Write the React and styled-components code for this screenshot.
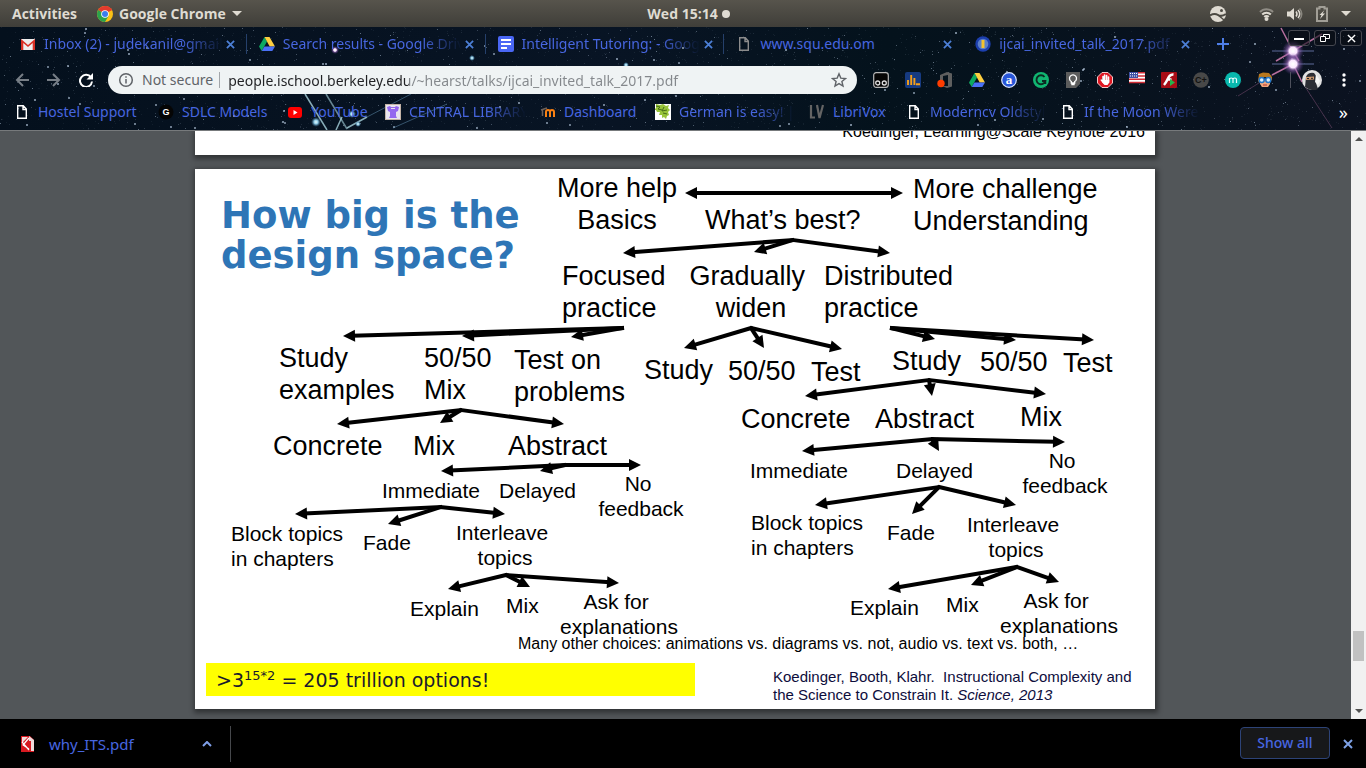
import React from "react";
import styled, { createGlobalStyle } from "styled-components";

const GlobalStyle = createGlobalStyle`
  * { box-sizing: border-box; }
  body { margin: 0; background: #000; font-family: "Noto Sans", "Open Sans", sans-serif; font-size: 14px; }
  button { font: inherit; color: inherit; background: none; border: 0; padding: 0; }
  a { color: inherit; text-decoration: none; }
  svg { display: block; }
`;

const Desktop = styled.div`
  min-height: 100vh;
  display: flex;
  flex-direction: column;
`;

/* ---------- system bar ---------- */

const SystemBar = styled.header`
  height: 27px;
  display: grid;
  grid-template-columns: 1fr auto 1fr;
  align-items: center;
  padding: 0 15px 0 12px;
  background: linear-gradient(#57544c, #3f3e39);
  color: #dfdbd2;
  font-family: "Open Sans", sans-serif;
  font-weight: 700;
  line-height: 20px;
`;

const BarGroup = styled.div`
  display: flex;
  align-items: center;
  gap: ${(p) => p.$gap}px;
  justify-content: ${(p) => (p.$end ? "flex-end" : "flex-start")};
`;

const Clock = styled(BarGroup)`
  padding-left: 14px;
`;

const BarButton = styled.button`
  display: flex;
  align-items: center;
  gap: 6px;
`;

const Caret = styled.span`
  border: 5px solid transparent;
  border-top-color: #dfdbd2;
  border-bottom-width: 0;
`;

const Dot = styled.span`
  width: 8px;
  height: 8px;
  border-radius: 50%;
  background: #dfdbd2;
`;

/* ---------- browser chrome ---------- */

const Chrome = styled.div`
  position: relative;
  overflow: hidden;
  background: linear-gradient(90deg, #04101d, #081424 45%, #04121c 65%, #0b1220);
  color: #4766e0;
`;

const Sky = styled.svg`
  position: absolute;
  inset: 0;
  width: 100%;
  height: 100%;
`;

const ChromeRow = styled.div`
  position: relative;
  display: flex;
  align-items: ${(p) => p.$align || "center"};
  height: ${(p) => p.$height}px;
  padding: ${(p) => p.$pad};
`;

const TabStrip = styled.div`
  flex: 0 1 1194px;
  min-width: 0;
  display: flex;
  align-items: center;
  height: 34px;
`;

const Tab = styled.div`
  flex: 1 1 0;
  min-width: 0;
  display: flex;
  align-items: center;
  height: 20px;
  padding: 0 7px 0 12px;
  border-right: 1px solid ${(p) => (p.$divider ? "#25406b" : "transparent")};
`;

const FadeText = styled.span`
  flex: 1;
  min-width: 0;
  margin-left: 8px;
  overflow: hidden;
  white-space: nowrap;
  line-height: 20px;
  ${(p) => p.$fade && "mask-image: linear-gradient(90deg, #000 calc(100% - 40px), transparent);"}
`;

const CloseButton = styled.button`
  width: 16px;
  height: 16px;
  display: grid;
  place-items: center;
  color: ${(p) => p.$color || "#4c7fd6"};
`;

const NewTab = styled(CloseButton)`
  margin: 9px 0 0 13px;
`;

const WindowButtons = styled.div`
  display: flex;
  gap: 4px;
  margin: 3px 0 0 auto;
`;

const WindowButton = styled.button`
  width: 22px;
  height: 16px;
  display: grid;
  place-items: center;
  border: 1px solid #45474f;
  border-radius: 3px;
  background: rgba(10, 13, 20, 0.6);
  color: #fff;
`;

const ToolButton = styled.button`
  width: 32px;
  height: 28px;
  display: grid;
  place-items: center;
  flex: none;
`;

const Omnibox = styled.form`
  flex: 1;
  min-width: 0;
  height: 28px;
  margin: 0 8px 0 6px;
  padding: 0 10px;
  display: flex;
  align-items: center;
  border-radius: 14px;
  background: #eff3f4;
  color: #5f6368;
`;

const Security = styled.label`
  display: flex;
  align-items: center;
  gap: 8px;
  padding-right: 6px;
  border-right: 1px solid #a2a6aa;
  line-height: 16px;
  white-space: nowrap;
`;

const Address = styled.input`
  flex: 1;
  min-width: 0;
  border: 0;
  outline: 0;
  margin-left: 8px;
  padding: 0;
  height: 20px;
  font: inherit;
  color: transparent;
  background: linear-gradient(90deg, #202124 ${(p) => p.$host}px, #84888c ${(p) => p.$host}px);
  background-clip: text;
`;

const Separator = styled.span`
  width: 1px;
  height: 16px;
  margin: 0 5px 0 9px;
  background: #4d505c;
`;

const Bookmark = styled.a`
  flex: 0 1 ${(p) => p.$width}px;
  min-width: 0;
  display: flex;
  align-items: center;
  padding-right: 14px;
`;

const More = styled.button`
  margin-left: auto;
  color: #fff;
  font-size: 18px;
  line-height: 20px;
`;

/* ---------- document viewer ---------- */

const Viewer = styled.main`
  flex: 1;
  display: flex;
  background: #525659;
  border-top: 1px solid #777a7c;
`;

const Pages = styled.div`
  flex: 1;
  min-width: 0;
  display: flex;
  flex-direction: column;
  align-items: center;
  gap: 14px;
  padding: 0 1px 10px 0;
  overflow: hidden;
`;

const PreviousPage = styled.section`
  width: 960px;
  height: 24px;
  display: flex;
  justify-content: flex-end;
  align-items: flex-end;
  padding: 0 10px 14px;
  overflow: hidden;
  background: #fff;
  color: #000;
  font: 16px/18px "Liberation Sans", Arial, sans-serif;
  box-shadow: 1px 2px 5px 2px rgba(0, 0, 0, 0.4);
`;

const Slide = styled.section`
  position: relative;
  width: 960px;
  height: 540px;
  background: #fff;
  color: #000;
  font-family: "Liberation Sans", Arial, sans-serif;
  box-shadow: 1px 2px 5px 2px rgba(0, 0, 0, 0.4);
`;

const Title = styled.h1`
  position: absolute;
  left: 26px;
  top: 27px;
  margin: 0;
  font: bold 37px/40px "DejaVu Sans", Verdana, sans-serif;
  color: #2e75b6;
  white-space: pre;
`;

const sizes = {
  large: "font-size: 27px; line-height: 32px;",
  medium: "font-size: 21px; line-height: 25px;",
  note: "font-size: 16px; line-height: 18px;",
};

const Node = styled.div`
  position: absolute;
  left: ${(p) => p.$x}px;
  top: ${(p) => p.$y}px;
  white-space: pre;
  ${(p) => sizes[p.$size]}
  ${(p) => p.$center && "transform: translateX(-50%); text-align: center;"}
`;

const Highlight = styled.p`
  position: absolute;
  left: 11px;
  top: 494px;
  width: 489px;
  height: 33px;
  margin: 0;
  padding-left: 10px;
  background: #ff0;
  color: #1a1a2e;
  font: 19px/34px "DejaVu Sans", Verdana, sans-serif;
  sup { font-size: 13px; line-height: 0; }
`;

const Citation = styled.p`
  position: absolute;
  left: 578px;
  top: 499px;
  margin: 0;
  white-space: pre;
  color: #0d0d3c;
  font-size: 15px;
  line-height: 18px;
`;

const Arrows = styled.svg`
  position: absolute;
  inset: 0;
`;

const ScrollTrack = styled.div`
  width: 15px;
  display: flex;
  flex-direction: column;
  align-items: center;
  background: #f1f1f1;
`;

const ScrollArrow = styled.button`
  width: 15px;
  height: 16px;
  display: grid;
  place-items: center;
  color: #505050;
`;

const ScrollThumb = styled.div`
  width: 11px;
  height: 30px;
  margin: auto 0 42px;
  background: #c1c1c1;
`;

/* ---------- downloads ---------- */

const Downloads = styled.footer`
  height: 49px;
  display: flex;
  align-items: center;
  padding: 0 10px 0 20px;
  background: #000;
  color: #4766e0;
`;

const DownloadItem = styled.div`
  width: 211px;
  height: 36px;
  display: flex;
  align-items: center;
  gap: 13px;
  padding-right: 15px;
  border-right: 1px solid #46484c;
  a { flex: 1; font-size: 15px; }
`;

const ShowAll = styled.button`
  width: 90px;
  height: 32px;
  margin: 0 10px 2px auto;
  border: 1px solid #2d4377;
  border-radius: 4px;
  background: #17181a;
  font-weight: 500;
`;

/* ---------- icons ---------- */

const Cross = ({ size = 10, width = 2 }) => (
  <svg width={size} height={size} viewBox="0 0 10 10" stroke="currentColor" strokeWidth={width}>
    <path d="M1 1l8 8M9 1l-8 8" />
  </svg>
);

const IconSvg = styled.svg`
  flex: none;
`;

const Icon = ({ children }) => (
  <IconSvg width="16" height="16" viewBox="0 0 16 16">{children}</IconSvg>
);

const letter = { textAnchor: "middle", fontFamily: "Liberation Sans, sans-serif", fontWeight: "bold" };

const FileIcon = ({ color = "#fff" }) => (
  <Icon><path d="M3.700 1.700h5.600l3 3.300v9.300H3.700zM9 1.700V5.500h3.300" fill="none" stroke={color} strokeWidth="1.400" /></Icon>
);
const ChromeIcon = () => (
  <Icon>
    <circle cx="8" cy="8" r="8" fill="#fbc116" />
    <path d="M8 8L1.100 4A8 8 0 0 1 14.900 4z" fill="#e33b2e" />
    <path d="M1.100 4A8 8 0 0 0 8 16L11.500 10L8 8z" fill="#2ba24c" />
    <path d="M8 4.300H15L14.900 4A8 8 0 0 0 8 0z" fill="#e33b2e" />
    <circle cx="8" cy="8" r="3.800" fill="#fff" /><circle cx="8" cy="8" r="3" fill="#3b7ded" />
  </Icon>
);
const GmailIcon = () => (
  <Icon>
    <path d="M1 3h14v11H1z" fill="#eee" />
    <path d="M1 14V3l7 6 7-6v11h-2.300V7L8 11 3.300 7v7z" fill="#d93025" />
  </Icon>
);
const driveShapes = (
  <>
    <path d="M5.500 1L0 10.500 2.700 15 8 5.500z" fill="#0da960" />
    <path d="M5.500 1h5L16 10.500h-5.300z" fill="#ffcf3f" />
    <path d="M5.400 10.500H16L13.300 15H2.700z" fill="#4a70f5" />
  </>
);
const DriveIcon = () => <Icon>{driveShapes}</Icon>;
const DocsIcon = () => (
  <Icon><rect width="16" height="16" rx="2" fill="#4a67f5" /><path d="M3 4h10M3 8h10M3 12h6" stroke="#fff" strokeWidth="2" /></Icon>
);
const SealIcon = () => (
  <Icon>
    <circle cx="8" cy="8" r="7.700" fill="#1c3fae" /><circle cx="8" cy="8" r="5.300" fill="#5d80c8" />
    <path d="M6.500 4h3v8h-3z" fill="#f5c32c" />
  </Icon>
);
const SdlcIcon = () => (
  <Icon><circle cx="8" cy="8" r="7.500" fill="#050505" /><text {...letter} x="8" y="11" fontSize="9" fill="#fff">G</text></Icon>
);
const YouTubeIcon = () => (
  <Icon><rect x="1" y="3" width="14" height="11" rx="3" fill="#f00" /><path d="M6.500 6l4 2.500-4 2.500z" fill="#fff" /></Icon>
);
const LibraryIcon = () => (
  <Icon>
    <path d="M0 0h16v16H0z" fill="#c3b3a6" /><path d="M1 1h14v14H1z" fill="#e9e4ef" />
    <path d="M2 3l3-1 1 1h4l1-1 3 1-1 4-2 1v4l1 2H4l1-2V8L3 7z" fill="#9468ef" />
    <path d="M6 4h4v1H6z" fill="#e9e4ef" />
  </Icon>
);
const MoodleIcon = () => (
  <Icon>
    <path d="M6 13V8a2 2 0 0 1 4 0v5M10 8a2 2 0 0 1 4 0v5" fill="none" stroke="#f98012" strokeWidth="2" />
    <path d="M1 6l6-2M2.500 6v6" stroke="#6f625a" strokeWidth="1.500" />
  </Icon>
);
const LeavesIcon = () => (
  <Icon>
    <path d="M0 0h16v16H0z" fill="#fff" />
    <path d="M1 0l4 1 3-1 3 2 3-1-1 3 2 2-2 2 1 3-2 1-1 3-2-2-2 1 0-3-3 0 1-3-3 0-1-2-2 0 2-2z" fill="#98c43a" />
    <path d="M1 2l4 1-2 2 4 1M9 3l-2 4 5-1M8 9l4 1" fill="none" stroke="#476e17" />
  </Icon>
);
const LibriIcon = () => (
  <Icon><path d="M2 1v12.500h4M8 1l2.500 13L14 1" fill="none" stroke="#646464" strokeWidth="2.200" /></Icon>
);

const extensions = [
  ["Tampermonkey", <><rect x=".7" y=".7" width="14.600" height="14.600" rx="2.500" fill="#050505" stroke="#b8b8b8" strokeWidth="1.200" /><g fill="none" stroke="#ddd" strokeWidth="1.300"><circle cx="4.700" cy="11" r="2" /><circle cx="11.300" cy="11" r="2" /></g></>],
  ["Analytics", <><rect width="16" height="16" rx="2" fill="#163a80" /><path d="M3 13V8M6.200 13V3M9.400 13V6M11 12.200h4" stroke="#f7a11a" strokeWidth="1.900" /></>],
  ["Office", <><path d="M3 3l7-3 5 1.500v13L10 16l-5-2 6 0V3L6 4v6H3z" fill="#5f5f5f" /><circle cx="4" cy="11.500" r="3.700" fill="#ff3d00" /></>],
  ["Drive", driveShapes],
  ["Dictionary", <><circle cx="8" cy="8" r="7.300" fill="#2856d8" stroke="#dce6ff" strokeWidth="1.200" /><text {...letter} fontFamily="Liberation Serif, serif" x="8" y="12" fontSize="13" fill="#fff">a</text></>],
  ["Grammar", <><circle cx="8" cy="8" r="8" fill="#11b672" /><path d="M11.500 5A4.500 4.500 0 1 0 12.300 9H9M12.300 9v3" fill="none" stroke="#0c2a22" strokeWidth="1.900" /></>],
  ["Keep", <><path d="M1 0h14v12l-4 4H1z" fill="#5c5c5c" /><path d="M6.300 9.500a3.500 3.500 0 1 1 3.400 0v1.500H6.300zM6.300 12.500h3.400" fill="none" stroke="#fff" strokeWidth="1.300" /></>],
  ["Ad blocker", <><path d="M5 .5h6L15.500 5v6L11 15.500H5L.5 11V5z" fill="#e01722" stroke="#f6caca" /><path d="M4.300 8l1.700 2V4.500M7.600 9V3M9.600 9V3.500M11.500 9.500V5" stroke="#fff" strokeWidth="1.600" strokeLinecap="round" /><path d="M5 8h7.300v2.500L10.500 13h-3L5 10z" fill="#fff" /></>],
  ["Language", <><path d="M0 0h16v11H0z" fill="#fff" /><path d="M0 .7h16M0 4h16M0 7.300h16M0 10.400h16" stroke="#d22d36" strokeWidth="1.500" /><path d="M0 0h9v6H0z" fill="#3f51a5" /><path d="M1 1.500h7M1 4h7" stroke="#fff" strokeDasharray="1 1" /></>],
  ["Flash", <><rect width="16" height="16" rx="1" fill="#a80d16" /><path d="M12.500 2.500C7 2 7.500 8 3 13M5.500 7.500h5" fill="none" stroke="#fff" strokeWidth="2.400" /><path d="M9 7l5 3.500L9 14z" fill="#25b34b" /></>],
  ["Citations", <><circle cx="8" cy="8" r="7.800" fill="#484848" /><text {...letter} x="8" y="11" fontSize="9" fill="#111">C+</text></>],
  ["Mendeley", <><circle cx="8" cy="8" r="8" fill="#08b8ad" /><path d="M4.500 11V6M4.500 7.500c0-2 3.500-2 3.500 0V11M8 7.500c0-2 3.500-2 3.500 0V11" fill="none" stroke="#e9ffff" strokeWidth="1.200" /></>],
  ["Reader", <><path d="M3 8h10v4l-2 3H5l-2-3z" fill="#f0a87c" /><path d="M1 9l1-7 4-1.500 6 .5 3 4v4l-2-3-5-1-4 1-2 4z" fill="#b9781d" /><g fill="#d9effc" stroke="#2477c8" strokeWidth="1.500"><circle cx="4.700" cy="8" r="2.500" /><circle cx="11.300" cy="8" r="2.500" /></g><path d="M6 13h4" stroke="#b33" /></>],
];

/* ---------- night sky theme ---------- */

function makeStars(count) {
  let seed = 20170;
  const next = () => {
    seed = (seed * 16807) % 2147483647;
    return seed / 2147483647;
  };
  return Array.from({ length: count }, () => {
    const x = Math.round(next() * 1366);
    const y = Math.round(next() * 103);
    const bright = next();
    return { x, y, size: bright > 0.97 ? 2 : 1, opacity: 0.07 + Math.pow(bright, 6) * 0.5 };
  });
}
const stars = makeStars(2600);

const NightSky = () => (
  <Sky viewBox="0 0 1366 103" preserveAspectRatio="xMidYMin slice" aria-hidden="true">
    <defs>
      <radialGradient id="flare">
        <stop offset="0" stopColor="#fff" /><stop offset=".35" stopColor="#fbe6ff" />
        <stop offset=".55" stopColor="#a572c4" stopOpacity=".6" /><stop offset="1" stopColor="#5a3a90" stopOpacity="0" />
      </radialGradient>
      <radialGradient id="glow">
        <stop offset="0" stopColor="#e6fbff" /><stop offset=".4" stopColor="#8fcbe6" />
        <stop offset="1" stopColor="#2a5f8a" stopOpacity="0" />
      </radialGradient>
    </defs>
    {stars.map((s, i) => <rect key={i} x={s.x} y={s.y} width={s.size} height={s.size} fill="#c9dcf2" opacity={s.opacity} />)}
    <g stroke="#b66e9d" fill="none">
      <path d="M1281 1l12 23 29-17M1276 34l17-10 6 10M1272 48l21-11 9 18" strokeWidth="1.500" />
      <path d="M1302 55l30 46M1238 69l34-21" opacity=".35" />
      <path d="M1272 24h42M1272 37h42" stroke="#98a9ed" opacity=".6" />
    </g>
    <circle cx="1293" cy="24" r="11" fill="url(#flare)" /><circle cx="1293" cy="37" r="11" fill="url(#flare)" />
    <g stroke="#a9d3dd" fill="none">
      <path d="M305 67l22 36" strokeWidth="1.500" opacity=".8" />
      <path d="M326 67l21 35" strokeWidth="1.500" opacity=".6" />
      <path d="M347 101l20-11M336 103l6-13" strokeWidth="1.500" opacity=".8" />
      <path d="M367 90l44-23M393 101l54-24" stroke="#6fa5c8" opacity=".45" />
    </g>
    <circle cx="316" cy="95" r="5" fill="url(#glow)" /><circle cx="352" cy="87" r="4" fill="url(#glow)" />
    <circle cx="358" cy="97" r="3" fill="url(#glow)" /><circle cx="335" cy="23" r="4" fill="url(#flare)" />
    <circle cx="472" cy="31" r="3" fill="url(#glow)" /><circle cx="626" cy="38" r="3" fill="url(#glow)" />
  </Sky>
);

/* ---------- content ---------- */

const tabs = [
  { title: "Inbox (2) - judekanil@gmail.com", icon: <GmailIcon />, fade: true, divider: true },
  { title: "Search results - Google Drive", icon: <DriveIcon />, fade: true, divider: true },
  { title: "Intelligent Tutoring: - Google Docs", icon: <DocsIcon />, fade: true, divider: true },
  { title: "www.squ.edu.om", icon: <FileIcon color="#8c8c8c" /> },
  { title: "ijcai_invited_talk_2017.pdf", icon: <SealIcon />, fade: true },
];

const bookmarks = [
  ["Hostel Support", 144, <FileIcon />],
  ["SDLC Models", 129, <SdlcIcon />],
  ["YouTube", 98, <YouTubeIcon />],
  ["CENTRAL LIBRARY", 155, <LibraryIcon />, true],
  ["Dashboard", 115, <MoodleIcon />],
  ["German is easy! | The", 154, <LeavesIcon />, true],
  ["LibriVox", 97, <LibriIcon />],
  ["Moderncv Oldstyle", 154, <FileIcon />, true],
  ["If the Moon Were Only", 154, <FileIcon />, true],
];

const nodes = [
  ["large", 422, 3, "More help\nBasics", true],
  ["large", 510, 35, "What’s best?"],
  ["large", 718, 4, "More challenge\nUnderstanding"],
  ["large", 367, 91, "Focused\npractice"],
  ["large", 556, 91, "Gradually \nwiden", true],
  ["large", 629, 91, "Distributed\npractice"],
  ["large", 84, 173, "Study\nexamples"],
  ["large", 229, 173, "50/50\nMix"],
  ["large", 319, 175, "Test on\nproblems"],
  ["large", 449, 185, "Study"],
  ["large", 533, 186, "50/50"],
  ["large", 616, 187, "Test"],
  ["large", 697, 176, "Study"],
  ["large", 785, 177, "50/50"],
  ["large", 868, 178, "Test"],
  ["large", 78, 261, "Concrete"],
  ["large", 218, 261, "Mix"],
  ["large", 313, 261, "Abstract"],
  ["large", 546, 234, "Concrete"],
  ["large", 680, 234, "Abstract"],
  ["large", 825, 232, "Mix"],
  ["medium", 187, 309, "Immediate"],
  ["medium", 304, 309, "Delayed"],
  ["medium", 446, 302, "No \nfeedback", true],
  ["medium", 36, 352, "Block topics\nin chapters"],
  ["medium", 168, 361, "Fade"],
  ["medium", 310, 351, "Interleave \ntopics", true],
  ["medium", 215, 427, "Explain"],
  ["medium", 311, 424, "Mix"],
  ["medium", 424, 420, "Ask for \nexplanations", true],
  ["medium", 555, 289, "Immediate"],
  ["medium", 701, 289, "Delayed"],
  ["medium", 870, 279, "No \nfeedback", true],
  ["medium", 556, 341, "Block topics\nin chapters"],
  ["medium", 692, 351, "Fade"],
  ["medium", 821, 343, "Interleave \ntopics", true],
  ["medium", 655, 426, "Explain"],
  ["medium", 751, 423, "Mix"],
  ["medium", 864, 419, "Ask for \nexplanations", true],
  ["note", 323, 466, "Many other choices: animations vs. diagrams vs. not, audio vs. text vs. both, …"],
];

const branches = [
  { from: [598, 71], to: [[428, 84], [559, 83], [695, 84]] },
  { from: [428, 159], to: [[148, 167], [267, 167], [376, 168]] },
  { from: [556, 159], to: [[489, 179], [569, 179], [647, 180]] },
  { from: [696, 159], to: [[740, 170], [821, 171], [899, 171]] },
  { from: [734, 211], to: [[610, 227], [737, 227], [851, 225]] },
  { from: [266, 241], to: [[142, 255], [245, 254], [369, 255]] },
  { from: [370, 296], to: [[246, 302], [345, 302], [446, 296]] },
  { from: [246, 338], to: [[100, 345], [193, 355], [310, 345]] },
  { from: [311, 406], to: [[253, 420], [335, 418], [424, 414]] },
  { from: [737, 270], to: [[607, 282], [744, 282], [870, 273]] },
  { from: [744, 318], to: [[620, 336], [717, 345], [821, 336]] },
  { from: [822, 398], to: [[693, 420], [776, 416], [864, 413]] },
  { from: [598, 24], to: [[490, 24], [708, 24]] },
];

function Arrow({ from, to }) {
  const [x1, y1] = from;
  const [x2, y2] = to;
  const length = Math.hypot(x2 - x1, y2 - y1);
  const angle = (Math.atan2(y2 - y1, x2 - x1) * 180) / Math.PI;
  return (
    <g transform={`translate(${x1} ${y1}) rotate(${angle})`}>
      <path d={`M-1 0H${length - 9}`} stroke="#000" strokeWidth="4" />
      <path d={`M${length} 0l-12 -6v12z`} />
    </g>
  );
}

export default function App() {
  return (
    <Desktop>
      <GlobalStyle />
      <SystemBar>
        <BarGroup $gap={20}>
          <BarButton>Activities</BarButton>
          <BarButton><ChromeIcon />Google Chrome<Caret /></BarButton>
        </BarGroup>
        <Clock $gap={4}>Wed 15:14<Dot /></Clock>
        <BarGroup $gap={13} $end>
          <svg width="36" height="16" viewBox="0 0 36 16">
            <circle cx="8" cy="8" r="8" fill="#dfdbd2" />
            <path d="M0 9.500c3-2 5-2.500 8-.5s5 1 8-1" fill="none" stroke="#4b4942" strokeWidth="2" />
            <path d="M8 9l6 5" stroke="#4b4942" strokeWidth="1.500" /><circle cx="11.500" cy="4.500" r="1.500" fill="#4b4942" />
          </svg>
          <svg width="15" height="14" viewBox="0 0 15 14" fill="none" stroke="#dfdbd2" strokeWidth="2">
            <path d="M1 5a9 9 0 0 1 13 0" opacity=".45" /><path d="M3.200 7.500a6 6 0 0 1 8.600 0M5.300 10a3 3 0 0 1 4.400 0" /><circle cx="7.500" cy="12" r="1" />
          </svg>
          <svg width="16" height="14" viewBox="0 0 16 14">
            <path d="M0 4.500h3L7 1v12L3 9.500H0z" fill="#dfdbd2" />
            <path d="M9 4.500q2 2.500 0 5M11 3q3.500 4 0 8" fill="none" stroke="#dfdbd2" strokeWidth="1.500" /><path d="M12.500 1.500q4.500 5.500 0 11" fill="none" stroke="#89867e" strokeWidth="1.500" />
          </svg>
          <svg width="12" height="16" viewBox="0 0 12 16">
            <path d="M1 2.500h2.500V1h5v1.500H11V15H1z" fill="none" stroke="#a19e96" strokeWidth="2" /><path d="M8.500 4L3.500 9h2L4 13l5-5.500H6.500z" fill="#dfdbd2" />
          </svg>
          <Caret />
        </BarGroup>
      </SystemBar>

      <Chrome>
        <NightSky />
        <ChromeRow $height={35} $align="flex-start" $pad="0 4px 0 8px">
          <TabStrip>
            {tabs.map((t) => (
              <Tab key={t.title} $divider={t.divider}>
                {t.icon}
                <FadeText $fade={t.fade}>{t.title}</FadeText>
                <CloseButton aria-label={`Close ${t.title}`}><Cross size={9} /></CloseButton>
              </Tab>
            ))}
          </TabStrip>
          <NewTab aria-label="New tab">
            <svg width="12" height="12" viewBox="0 0 12 12" stroke="#4e7ee8" strokeWidth="2"><path d="M6 0v12M0 6h12" /></svg>
          </NewTab>
          <WindowButtons>
            <WindowButton aria-label="Minimize"><svg width="10" height="10" stroke="#fff" strokeWidth="2"><path d="M0 6h10" /></svg></WindowButton>
            <WindowButton aria-label="Restore"><svg width="10" height="8" fill="#0a0d14" stroke="#fff"><path d="M3.500.5h6v4h-6z" /><path d="M.5 2.500h5v5h-5z" /></svg></WindowButton>
            <WindowButton aria-label="Close window"><Cross size={9} width={1.5} /></WindowButton>
          </WindowButtons>
        </ChromeRow>

        <ChromeRow $height={36} $pad="0 6px">
          <ToolButton aria-label="Back"><svg width="14" height="14" fill="none" stroke="#777e86" strokeWidth="2"><path d="M14 7H2M8 1L2 7l6 6" /></svg></ToolButton>
          <ToolButton aria-label="Forward"><svg width="14" height="14" fill="none" stroke="#777e86" strokeWidth="2"><path d="M0 7h12M6 1l6 6-6 6" /></svg></ToolButton>
          <ToolButton aria-label="Reload"><svg width="14" height="14" fill="none" stroke="#fff" strokeWidth="2"><path d="M12 4.500A6 6 0 1 0 13 8.500" /><path d="M14 0v6.500H7.500z" fill="#fff" stroke="none" /></svg></ToolButton>
          <Omnibox>
            <Security htmlFor="address">
              <Icon><g fill="none" stroke="#5f6368" strokeWidth="1.500"><circle cx="8" cy="8" r="6.300" /><path d="M8 7v4.500M8 4.200v1.600" /></g></Icon>
              Not secure
            </Security>
            <Address id="address" $host={181} defaultValue="people.ischool.berkeley.edu/~hearst/talks/ijcai_invited_talk_2017.pdf" />
            <button type="button" aria-label="Bookmark this page">
              <Icon><path d="M8 1.800l1.800 4.300 4.700.4-3.600 3 1.100 4.600L8 11.600l-4 2.500 1.100-4.600-3.600-3 4.700-.4z" fill="none" stroke="#5f6368" strokeWidth="1.400" /></Icon>
            </button>
          </Omnibox>
          {extensions.map(([name, art]) => <ToolButton key={name} aria-label={name}><Icon>{art}</Icon></ToolButton>)}
          <Separator />
          <ToolButton aria-label="Profile">
            <svg width="20" height="20" viewBox="0 0 20 20">
              <circle cx="10" cy="10" r="10" fill="#e2e2e2" />
              <path d="M3 17l1-10q2-5 8-4l3 4-1 6 2 6q-6 3-13-2z" fill="#2c2e35" />
              <path d="M4 7l8-.5v3L4 10z" fill="#d09a70" /><path d="M5 8.500h2M9 8.300h2" stroke="#222" />
              <path d="M14 4l4 7-2 4-3-3z" fill="#f6f6f6" />
            </svg>
          </ToolButton>
          <ToolButton aria-label="Menu"><svg width="4" height="14" fill="#fff"><circle cx="2" cy="2" r="1.700" /><circle cx="2" cy="7" r="1.700" /><circle cx="2" cy="12" r="1.700" /></svg></ToolButton>
        </ChromeRow>

        <ChromeRow as="nav" $height={32} $pad="0 18px 4px 14px">
          {bookmarks.map(([name, width, icon, fade]) => (
            <Bookmark key={name} href="#" $width={width}>{icon}<FadeText $fade={fade}>{name}</FadeText></Bookmark>
          ))}
          <More aria-label="More bookmarks">»</More>
        </ChromeRow>
      </Chrome>

      <Viewer>
        <Pages>
          <PreviousPage>Koedinger, Learning@Scale Keynote 2016</PreviousPage>
          <Slide>
            <Title>{"How big is the\ndesign space?"}</Title>
            <Arrows width="960" height="540" viewBox="0 0 960 540" aria-hidden="true">
              {branches.flatMap((b) => b.to.map((t) => <Arrow key={`${b.from}-${t}`} from={b.from} to={t} />))}
            </Arrows>
            {nodes.map(([size, x, y, label, center]) => (
              <Node key={`${x}-${y}`} $size={size} $x={x} $y={y} $center={center}>{label}</Node>
            ))}
            <Highlight>&gt;3<sup>15*2</sup> = 205 trillion options!</Highlight>
            <Citation>
              {"Koedinger, Booth, Klahr.  Instructional Complexity and\nthe Science to Constrain It. "}<i>Science, 2013</i>
            </Citation>
          </Slide>
        </Pages>
        <ScrollTrack>
          <ScrollArrow aria-label="Scroll up"><svg width="8" height="4" fill="currentColor"><path d="M4 0l4 4H0z" /></svg></ScrollArrow>
          <ScrollThumb />
          <ScrollArrow aria-label="Scroll down"><svg width="8" height="4" fill="currentColor"><path d="M0 0h8L4 4z" /></svg></ScrollArrow>
        </ScrollTrack>
      </Viewer>

      <Downloads>
        <DownloadItem>
          <Icon><path d="M1 0h9l4 4v12H1z" fill="#d71920" /><path d="M2 1h6L2 7zM9 0l5 4v11h-3V5H9z" fill="#f0dada" /><path d="M2 6l7 8M9 2L3 9l6 4" fill="none" stroke="#fff" strokeWidth="1.200" /></Icon>
          <a href="#">why_ITS.pdf</a>
          <CloseButton aria-label="Download options"><svg width="10" height="6" fill="none" stroke="#7f9fe8" strokeWidth="2"><path d="M1 5l4-4 4 4" /></svg></CloseButton>
        </DownloadItem>
        <ShowAll>Show all</ShowAll>
        <CloseButton $color="#7ea1e6" aria-label="Close downloads"><Cross /></CloseButton>
      </Downloads>
    </Desktop>
  );
}
